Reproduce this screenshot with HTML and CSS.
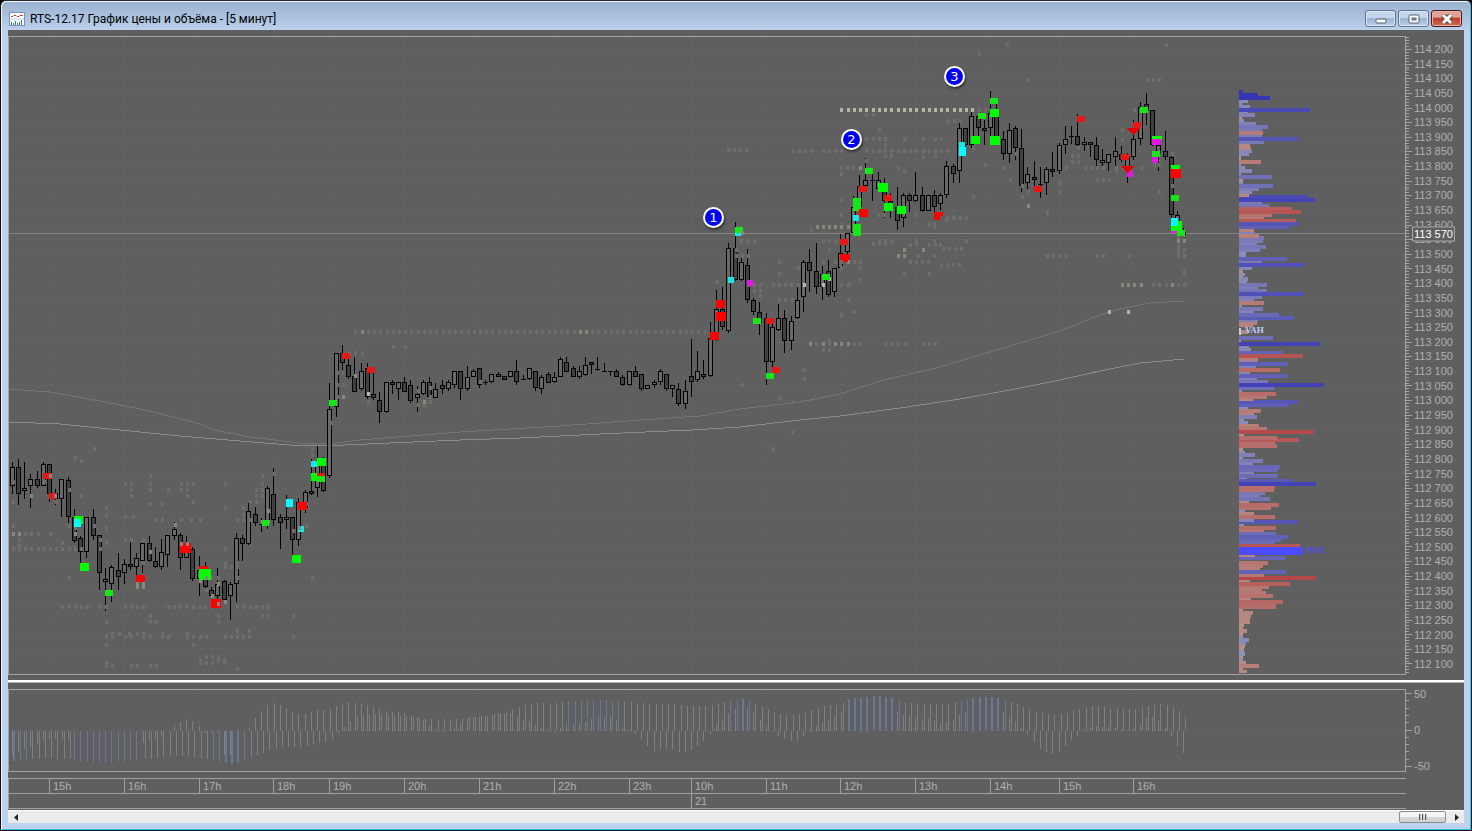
FILE: index.html
```html
<!DOCTYPE html>
<html lang="ru">
<head>
<meta charset="utf-8">
<title>RTS-12.17 График цены и объёма - [5 минут]</title>
<link rel="stylesheet" href="styles.css">
</head>
<body>
<div class="window">
  <header class="titlebar">
    <svg class="app-icon" width="16" height="14" viewBox="0 0 16 14" aria-hidden="true">
      <rect x="0.500" y="0.500" width="15" height="13" fill="#fff" stroke="#7d92b0"/>
      <path d="M2 4.500h2l1-1h2l1 1h2l1-1h3" fill="none" stroke="#d03a3a"/>
      <path d="M1 7h14" stroke="#b9c9dd"/>
      <path d="M2.500 10v3M4.500 11v2M6.500 9v4M8.500 11v2M10.500 10v3M12.500 8v5" stroke="#2f75c0"/>
    </svg>
    <h1 class="title">RTS-12.17 График цены и объёма - [5 минут]</h1>
    <div class="controls">
      <button class="control" aria-label="Свернуть"><svg width="12" height="10" viewBox="0 0 12 10"><rect x="1" y="5" width="10" height="4" rx="1" fill="#fff" stroke="#56606e"/></svg></button>
      <button class="control" aria-label="Развернуть"><svg width="12" height="10" viewBox="0 0 12 10"><rect x="1" y="1" width="10" height="8" rx="1" fill="#fff" stroke="#56606e"/><rect x="4" y="4" width="4" height="2" fill="#8fa9c8" stroke="#56606e"/></svg></button>
      <button class="control close" aria-label="Закрыть"><svg width="12" height="10" viewBox="0 0 12 10"><path d="M2 1l8 8M10 1l-8 8" stroke="#5b4548" stroke-width="5"/><path d="M2 1l8 8M10 1l-8 8" stroke="#fff" stroke-width="3"/></svg></button>
    </div>
  </header>
  <main class="content">
    <section class="panel price-panel">
      <svg class="plot" id="price" viewBox="8 36 1398 639" preserveAspectRatio="none" role="img" aria-label="График цены"></svg>
      <div class="axis">
        <svg class="ticks" id="price-ticks" viewBox="0 36 7 639" preserveAspectRatio="none"></svg>
        <div class="price-labels" id="price-labels"></div>
        <output class="last-price">113 570</output>
      </div>
    </section>
    <div class="splitter"></div>
    <section class="panel osc-panel">
      <svg class="plot" id="osc" viewBox="8 689 1398 83" preserveAspectRatio="none" role="img" aria-label="Осциллятор"></svg>
      <div class="axis">
        <svg class="ticks" id="osc-ticks" viewBox="0 689 7 83" preserveAspectRatio="none"></svg>
        <div class="osc-labels"><span>50</span><span>0</span><span class="negative">-50</span></div>
      </div>
    </section>
    <section class="time-axis">
      <div class="hours"><span></span><span>15h</span><span>16h</span><span>17h</span><span>18h</span><span>19h</span><span>20h</span><span>21h</span><span>22h</span><span>23h</span><span>10h</span><span>11h</span><span>12h</span><span>13h</span><span>14h</span><span>15h</span><span>16h</span></div>
      <div class="days"><span></span><span>21</span></div>
    </section>
    <div class="scrollbar">
      <button class="arrow" aria-label="Влево"><svg width="5" height="7" viewBox="0 0 5 7"><path d="M4 0v7L0 3.500z" fill="#222"/></svg></button>
      <div class="track"><button class="thumb" aria-label="Прокрутка"><i></i><i></i><i></i></button></div>
      <button class="arrow" aria-label="Вправо"><svg width="5" height="7" viewBox="0 0 5 7"><path d="M1 0v7l4-3.500z" fill="#222"/></svg></button>
    </div>
  </main>
</div>
<script src="chart.js"></script>
</body>
</html>
```

FILE: styles.css
```css
* { box-sizing: border-box; }
html, body { height: 100%; }
body {
  margin: 0;
  background: #000;
  font-family: "Liberation Sans", Arial, sans-serif;
  font-size: 11px;
  color: #b0b0b0;
}
button { font: inherit; padding: 0; margin: 0; }
svg { display: block; }

.window {
  height: 100vh;
  min-height: 400px;
  display: flex;
  flex-direction: column;
  background: #bcd2ee;
  border: 1px solid #111;
  border-top: 1px solid #2a2a30;
  border-radius: 6px 6px 0 0;
  box-shadow: inset 1px 1px 0 #f4f8fd, inset -1px -1px 0 #2fc3dc;
  padding: 0 7px 7px;
}
.titlebar {
  flex: none;
  display: flex;
  align-items: center;
  gap: 5px;
  margin: 1px -6px 0;
  height: 28px;
  padding: 5px 8px 0 7px;
  background: linear-gradient(#9ab2d1, #bad0eb);
  border-radius: 5px 5px 0 0;
}
.title {
  flex: 1;
  margin: 0;
  font: 400 12px/16px Roboto, "Noto Sans", sans-serif;
  color: #000;
  white-space: nowrap;
  overflow: hidden;
}
.controls { display: flex; gap: 2px; }
.control {
  width: 31px;
  height: 17px;
  display: flex;
  align-items: center;
  justify-content: center;
  border: 1px solid #5f7391;
  border-radius: 3px;
  background: linear-gradient(#c4d6ec 0 45%, #9bb4d2 50%, #b9d0ea);
  box-shadow: inset 0 0 0 1px #dce8f6;
}
.close {
  border-color: #4c1519;
  background: linear-gradient(#e0a196 0 40%, #bd3f29 50%, #cf6a50);
  box-shadow: inset 0 0 0 1px #e5b3a8;
}

.content {
  flex: 1;
  min-height: 0;
  display: flex;
  flex-direction: column;
  background: #5f5f5f;
  padding-top: 6px;
}
.panel { display: flex; min-height: 0; }
.price-panel { flex: 1; }
.osc-panel { height: 83px; margin: 6px 0; }
.plot { flex: 1; min-width: 0; height: 100%; }
.axis { position: relative; width: 58px; display: flex; }
.ticks { width: 7px; height: 100%; }
.price-labels, .osc-labels {
  display: flex;
  flex-direction: column;
  justify-content: space-between;
  line-height: 14px;
  padding: 6px 0 4px 1px;
  white-space: nowrap;
}
.osc-labels { padding: 0 0 0 1px; height: 86px; margin-top: -2px; }
.last-price {
  position: absolute;
  left: 6px;
  top: 31%;
  transform: translateY(-50%);
  padding: 0 1px;
  line-height: 13px;
  border: 1px solid #a8a8a8;
  background: #5f5f5f;
  color: #fff;
  white-space: nowrap;
}
.splitter {
  height: 3px;
  flex: none;
  margin-top: 5px;
  background: #fff;
  border-bottom: 1px solid #b4b4b4;
}
.time-axis { margin-right: 58px; border-bottom: 1px solid #a0a0a0; border-left: 1px solid #a0a0a0; }
.hours, .days { display: grid; border-top: 1px solid #a0a0a0; height: 15px; line-height: 14px; }
.hours { grid-template-columns: 40fr 75fr 75fr 74fr 56fr 75fr 75fr 75fr 75fr 62fr 75fr 74fr 75fr 75fr 69fr 74fr 273fr; }
.days { grid-template-columns: 682fr 715fr; }
.hours span, .days span { padding-left: 3px; border-left: 1px solid #a0a0a0; }
.hours span:first-child, .days span:first-child { border-left: 0; }
.scrollbar {
  display: flex;
  height: 13px;
  flex: none;
  margin-top: 1px;
  background: #ebebeb;
  border-top: 1px solid #fff;
}
.arrow { width: 16px; border: 0; background: none; display: flex; align-items: center; justify-content: center; }
.track { flex: 1; display: flex; justify-content: flex-end; padding-right: 2px; }
.thumb {
  width: 47px;
  display: flex;
  align-items: center;
  justify-content: center;
  gap: 1px;
  border: 1px solid #8c8c8c;
  border-radius: 2px;
  background: linear-gradient(#f5f5f5 0 45%, #d9d9d9 50%, #cfcfcf);
}
.thumb i { width: 2px; height: 6px; background: #555; border-right: 1px solid #ccc; }

.frame, .tick { stroke: #a3a3a3; fill: none; }
.grid { stroke: #646464; stroke-dasharray: 4 4; }
.crosshair { stroke: #858585; }
.ma-slow { fill: none; stroke: #8b8b8b; }
.ma-fast { fill: none; stroke: #747474; }
.cell { fill: #6e6d68; }
.cell-mid { fill: #88877b; }
.cell-high { fill: #b5b4a4; }
.wick { fill: #000; }
.up { fill: #696969; stroke: #000; }
.down { fill: #404040; stroke: #000; }
.bar { fill: #808080; }
.bar-extreme { fill: #6a7796; }
.badge { fill: #0000f4; stroke: #fff; stroke-width: 2; filter: drop-shadow(1px 2px 1px #333); }
.badge-text { fill: #fff; font: 13px "DejaVu Sans", sans-serif; text-anchor: middle; }
.level-text { font: 700 9px "Liberation Serif", serif; }
```

FILE: chart.js
```js
const CRISP = 'shape-rendering="crispEdges"';
const rect = (x, y, w, h, attrs) => `<rect x="${x}" y="${y}" width="${w}" height="${h}" ${attrs}/>`;
const line = (x1, y1, x2, y2, cls) => `<path class="${cls}" d="M${x1} ${y1}L${x2} ${y2}"/>`;
const px = v => Math.round(v / 3);
const col = v => Math.floor(v / 3);

// Segments hold coordinates in thirds of a pixel, measured from their origin.
// Candle: x, high, body top, body bottom, low, falling
const segments = [
{ ox: 0, oy: 430,
  candles: `37,96,112,167,192,0 55,87,112,192,225,1 73,96,175,184,207,0 91,132,148,167,234,0 112,124,148,167,175,1 130,96,103,167,167,0 148,103,103,193,215,1 166,177,190,208,225,0 184,148,148,208,262,0 205,141,150,262,280,1 223,237,262,332,340,1 241,319,325,367,410,1 259,262,262,367,383,0 280,237,262,317,330,1 298,316,316,430,480,1 316,415,448,454,543,0 334,404,412,463,516,0 355,369,421,440,480,1 373,387,403,430,462,0 391,333,403,412,420,1 409,370,385,412,440,0 427,340,340,394,430,0 448,317,340,394,395,1 466,352,394,412,413,1 484,326,367,412,420,0 502,316,316,376,410,0 523,276,298,317,329,0 541,310,316,385,420,1 559,318,345,385,385,0 577,352,358,448,454,1 598,378,421,448,498,0 616,396,440,472,487,1 634,470,481,499,500,1 652,414,463,499,510,0 673,450,454,510,512,1 691,456,463,499,570,0 709,309,325,463,516,0 727,315,325,341,393,1 745,220,244,341,345,0 766,231,253,280,287,1 784,265,282,283,305,1 802,168,175,283,296,0 820,114,193,271,288,1 841,253,262,280,356,1 859,195,262,271,297,0 877,262,262,331,375,1 895,205,217,331,348,0 916,180,185,235,250,0 934,88,184,193,195,1 952,48,95,175,200,0 970,82,88,184,185,1`,
  cells: `57:283,937 84:227 93:245 75:937 138:133,151,451,787 156:40,133 132:823 162:376,394,451,544,562,580,787,676 180:208,394,505,544,562,451,770,787 198:245,394,562,787,770 216:40,169,580,751,770 222:451,487,919 234:319,676,730 255:319,730 261:376,400 270:466,544,573,601,712,730,751,487 288:40,208,283,919 294:319,226 303:880 312:76,94,115,151 330:58,301,376,394,430 339:187,319 348:58 357:40,58,76,94,115,133,151,169,187,208,226,245,301,676 366:451 399:430,676,712 411:694,712,676 444:208,616,634,655,712,937 480:619 531:187,208,226,245,262,301,319,376,394,412,430,505,523,541,559,580,601,616,634,712,730,751,770,787,805 558:451,655,787,805,880 576:319,451,469,655 603:712,748 612:337,358,387,412,430,487,562 621:319,337,376,394,430,451,487,505,562,580,601,619,676,694,712,730,748,880 645:319,580 681:619,637,655 690:601,655,673 699:319,601,619,637,673 708:319,337,394,412,451,469 717:712`,
  mid: `198:94 285:526 312:40,58,226 243:805 276:805,787 366:451 461:412,430 470:412,430 454:601 498:637 462:655 516:676`, high: ``,
  marks: `129,129,26,18,r 147,190,24,17,r 222,258,27,24,G 221,267,22,24,C 240,399,27,24,G 315,480,24,18,g 408,435,27,22,R 540,339,33,30,R 597,408,27,9,R 597,417,36,33,G 633,507,30,27,R 786,271,21,17,g 858,207,21,24,C 893,216,28,24,R 876,375,27,24,G 894,288,18,18,c 933,93,18,18,c 951,84,27,24,G 933,129,20,25,G 951,129,24,27,g 951,129,24,9,r`,
  top: `342:544,562 138:151 198:166 444:619 522:655 294:898` },
{ ox: 300, oy: 320,
  candles: `88,189,268,469,475,0 109,99,100,260,291,0 127,75,100,128,150,1 145,115,136,170,177,1 163,110,168,215,215,1 184,129,154,206,213,0 202,129,145,232,238,1 220,150,223,233,240,1 238,216,241,277,309,1 259,187,187,277,278,0 277,180,187,196,222,1 295,187,187,206,240,0 313,171,187,215,216,1 331,180,196,242,249,1 352,198,223,233,276,0 370,180,187,223,224,0 388,171,187,232,235,1 406,190,206,233,234,0 427,180,196,206,222,1 445,180,187,206,213,0 463,154,154,196,204,0 481,154,154,206,240,1 502,138,170,206,213,0 520,147,154,170,171,0 538,145,145,196,204,1 556,180,187,187,195,0 574,162,163,187,188,0 595,156,163,170,171,1 613,168,169,179,180,1 631,154,154,170,171,0 649,120,154,187,195,1 670,165,178,178,179,0 688,145,145,178,179,0 706,154,154,205,213,1 724,165,170,206,222,0 745,156,163,188,189,1 763,156,170,187,188,0 781,111,118,170,171,0 799,111,127,155,156,1 820,138,145,170,171,1 838,138,154,170,177,0 856,111,136,164,168,0 874,127,127,136,162,1 892,111,146,146,153,0 913,129,154,154,155,0 931,154,154,154,168,0 949,147,154,170,171,1 967,165,170,196,197,1 988,154,154,196,197,0 1006,138,154,170,171,1 1024,163,163,206,213,1 1042,195,196,206,207,0 1063,180,187,196,204,0 1081,147,154,187,195,0 1099,163,163,206,213,1 1117,195,196,206,231,0 1135,189,206,251,258,1 1156,180,214,251,267,0 1174,57,169,187,231,1 1192,93,154,179,186,0`,
  cells: `36:166,187,205,223,241,262,280,298,316,334,355,373,391,409,430,448,466,484,505,523,541,559,577,598,616,634,652,673,691,709,727,748,766,784,802,823,841,859,877,895,916,934,952,970,991,1009,1027,1045,1066,1084,1102,1120,1141,1159,1177,1195 81:280,316 99:148,166,187 159:112,130 195:112,130 231:112,130,391 246:205,373,391 255:355,373 212:355 204:391 309:94 387:37 405:37 186:541`,
  mid: `36:187,841,859 168:166 231:130 245:373`, high: `222:205`,
  marks: `87,240,24,18,g 125,99,24,18,r 201,141,24,18,r`, top: `` },
{ ox: 680, oy: 190,
  candles: `52,483,544,570,575,0 70,510,553,559,567,1 91,396,445,559,560,0 109,300,358,445,452,0 127,291,358,412,420,1 145,159,175,422,428,0 166,96,175,271,272,1 184,205,217,271,272,0 202,177,226,331,338,1 220,325,331,367,375,1 238,336,367,400,434,1 259,369,385,517,585,1 277,400,412,517,540,0 295,342,385,421,422,0 313,360,385,454,489,1 334,378,394,454,480,0 352,291,331,385,386,0 370,210,217,322,366,0 388,177,217,244,306,1 409,159,244,290,312,1 427,228,253,290,330,0 445,210,244,314,320,1 463,235,235,307,320,0 481,132,190,235,236,0 502,130,130,185,215,0`,
  cells: `30:484 75:484,596,614,709 102:748,763 111:763 426:1,19,37,55,75 120:394 129:187,430 153:184,205,223,430,448,709,763 162:580,598,616,709 180:169,448 198:169,187,205,715,763 216:298,523,541,430,466,484,691,709,727,745 234:355,484,541 252:298,673,748 270:541 276:112 285:205,223,241,280,298,316,334,355,484,505 303:223,241 318:241 330:298,316,337,505 366:523 375:484 462:409,448,523,541,616,634,655,676,730,748,766 453:448 480:430,448 540:373 567:373 585:187 627:298 635:337 90:800 81:820 177:790,808,826,844 225:784,802,820,838 726:337 778:280`,
  mid: `111:412,430,448,466,484,505 180:673,731 198:655,673 216:505 462:391,430,466,484,505`, high: `285:373,430 267:448`,
  marks: `165,111,24,18,g 165,129,18,9,c 144,261,18,18,c 201,270,18,18,m 108,330,27,24,R 108,366,29,27,R 90,426,27,24,R 219,384,24,18,g 257,384,24,18,r 258,549,24,18,g 275,531,24,18,r 426,252,24,18,g 480,147,24,18,r 480,192,30,18,R 489,208,14,10,R`, top: `129:187` },
{ ox: 820, oy: 50,
  candles: `100,438,472,550,551,0 118,375,409,472,495,0 136,324,391,409,410,0 157,372,391,391,453,0 175,366,391,418,419,0 193,384,418,454,504,1 211,430,454,470,504,1 232,411,472,514,540,1 250,429,436,505,530,0 268,430,436,454,486,1 286,366,436,454,455,0 307,411,436,482,486,1 325,436,436,482,483,0 343,420,436,472,490,1 361,430,436,463,480,0 379,333,349,436,444,0 400,342,349,373,399,1 418,219,235,364,399,0 436,235,235,286,300,1 454,186,199,286,293,0 475,190,199,235,270,1 493,210,235,241,285,1 511,123,190,235,260,0 529,160,199,270,271,1 550,243,268,313,330,1 568,219,241,313,339,0 586,228,235,295,330,1`,
  cells: `12:478 180:478,496 195:139,160 213:385,403,421 240:178 267:139,160,178,196,310,347,365,253 285:196 294:460 303:-80,-62,-44,-26,10,28,46,64,139,160,178,196,214,234,253,271,289,310,328,347,365,383 318:196,214,347 321:310 333:139 354:64,82,100,121,235 363:253 372:64 441:460 345:496 504:383,403,421,439 574:28,46,178,196,214,440 585:271,328,346,361 300:-275,-257,-239,-221`,
  mid: `531:10,28 354:121`, high: `180:64,85,103,121,139,160,178,196,214,235,253,271,289,310,328,346,364,382,403,421,439,457`,
  marks: `99,444,24,40,g 99,495,18,18,c 117,477,27,24,R 99,522,24,36,g 117,408,24,18,r 135,354,24,18,g 174,399,30,27,G 192,435,24,18,r 192,459,27,24,G 231,468,27,24,G 342,486,27,12,R 342,498,18,12,R 417,276,18,16,c 417,292,21,27,C 453,258,27,24,G 474,189,24,18,g 510,144,24,18,g 510,177,27,24,G 510,258,30,27,G`, top: `` },
{ ox: 1000, oy: 70,
  candles: `64,177,235,349,366,1 82,291,313,340,356,0 103,273,322,331,356,1 121,291,341,341,384,0 139,291,298,340,375,0 157,246,298,304,320,1 178,219,226,304,312,0 196,168,208,226,252,0 214,168,199,199,222,0 232,132,199,226,228,1 253,201,217,226,243,0 271,216,217,226,261,1 289,201,226,271,288,1 307,237,271,280,288,0 325,252,253,280,303,0 346,201,244,262,288,0 364,228,253,271,275,1 382,250,262,300,339,0 400,150,208,262,270,0 421,96,112,208,225,0 439,69,103,121,165,1 457,121,121,226,228,1 475,200,226,248,303,0 496,183,244,262,270,1 514,258,262,436,446,1 532,423,436,480,482,0 550,474,485,488,492,0`,
  cells: `-75:22,499 30:85,442,460,478 120:403 180:367 210:367 235:235 258:217,235 275:217,235 252:49,518 284:463,478 294:13,199,256,274,292,310,349,367,424 303:349 330:31,292,310,328 339:181 348:67,518 366:85,181,478 381:67 427:142 435:142 558:142,160,181,199,292,310,385,535,553 530:535 540:553,535 549:535 503:535 602:553 611:553 645:460,478,499,535,553`,
  mid: `408:85 513:535,553 645:367,385,403,424,517`, high: `726:328,385`,
  marks: `102,348,24,18,r 231,138,24,18,r 363,252,24,18,r 382,303,18,18,m 399,156,24,18,r 420,111,24,18,g 456,198,30,12,G 456,207,27,18,m 456,243,24,18,g 456,262,18,18,m 513,285,27,12,G 513,297,30,27,R 513,375,24,18,g 513,453,33,30,G 513,444,21,24,C 513,483,18,7,m 531,480,24,18,g`, top: `` }
];
const markColor = { r: '#e61717', R: '#ff0000', g: '#17e617', G: '#00ff00', c: '#17e6e6', C: '#00ffff', m: '#e617e6' };

// Volume profile: top-bottom:right edge, "r" marks a selling level
const profile = [
[0, `300-309:54 309-315:36 315-325:60 337-346:54 324-335:240 339-350:75 350-357:36r 357-366:42 366-376:78 375-387:114 387-395:96 405-412:96 394-406:99r 412-423:208 423-432:102 432-440:60r 440-449:63r 449-459:66 459-468:57 468-480:33r 480-492:93r 492-498:33 498-507:45 507-518:66 518-525:33 525-537:126 537-544:39r 544-552:39 552-563:129 563-572:87 572-582:66 586-596:233 582-591:57r 594-605:255 605-612:96 612-622:117 622-630:186r 630-641:213r 641-650:126r 650-657:102r 657-668:198r 667-678:208 678-687:177 687-696:72r 696-702:75 709-720:102 702-713:87r 720-729:99 729-737:81 736-747:108 747-756:90 756-773:48 771-783:171 783-791:96 790-801:221 801-810:66 810-820:39r 820-828:45 828-836:39r 832-843:54 843-850:51 850-861:110 861-868:84 868-878:111`],
[290, `6-18:221 18-27:96 27-35:72 33-45:102r 45-52:36 52-63:99 63-70:72 78-90:193 70-81:147 90-96:84 96-105:81r 105-112:70r 120-132:54r 138-150:129 150-158:33 156-168:270 168-175:57 175-185:63 183-194:159 192-204:219r 204-213:84r 213-218:81 216-228:174 228-234:78 234-246:150r 246-253:60 252-264:171 264-272:81 270-280:114 280-291:282 291-300:132 300-307:36 306-318:138r 318-327:111r 330-342:203 327-333:69r 342-351:177 351-358:54 357-369:93r 369-376:72r 376-387:81 387-394:42 394-403:54 402-412:87r 412-422:111r 420-432:252r 432-439:42r 444-456:207r 438-450:141r 456-464:135r 463-474:141r 474-482:39r 482-490:45 489-501:75 501-507:39 507-519:99 519-527:69 525-537:150 537-546:144 546-552:72 552-564:144 564-571:51 568-578:188 576-588:258 588-597:135r 597-605:132r`],
[490, `6-15:105 15-22:90 21-33:120 33-40:57r 39-51:147r 51-60:123r 60-68:45 67-76:72r 76-87:135r 90-102:205 87-95:72 102-110:42 108-120:138r 120-127:102r 127-136:138 136-147:174 147-156:153 156-165:135 162-174:210r 198-210:165 195-200:75r 212-224:114r 224-234:99r 234-242:90r 240-252:168 258-270:258r 252-260:102r 270-278:60r 276-288:180r 288-297:117r 297-303:96r 303-312:108r 312-324:129r 330-342:159r 324-331:63r 342-357:138r 357-363:39r 363-375:69r 375-384:63r 384-402:60r 402-411:42r 411-417:39r 417-429:51r 429-437:39r 437-444:39 444-456:57 456-465:48 465-474:45r 474-480:42r 480-487:42 487-497:45 497-505:39r 505-513:39 513-522:48r 522-533:87r 533-540:39r 540-549:51r`]
];

const hours = [49, 124, 199, 273, 329, 404, 479, 554, 629, 691, 766, 840, 915, 990, 1059, 1133];

function shade(width, selling) {
  const t = Math.min(1, width / 78);
  const from = selling ? [182, 147, 140] : [147, 147, 184];
  const to = selling ? [182, 70, 70] : [66, 66, 182];
  return `rgb(${from.map((v, i) => Math.round(v + (to[i] - v) * t)).join()})`;
}

function cells(seg, key, cls) {
  return seg[key].split(' ').filter(Boolean).map(row => {
    const [y, xs] = row.split(':');
    return xs.split(',').map(x => rect(seg.ox + col(+x) - 1, seg.oy + px(+y) - 2, 3, 4, `class="${cls}"`)).join('');
  }).join('');
}

function drawPrice() {
  let s = `<g ${CRISP}>`;
  for (let k = 0; k < 43; k++) s += line(9, Math.round(49 + k * 14.63) + 0.5, 1406, Math.round(49 + k * 14.63) + 0.5, 'grid');
  for (const h of hours) s += line(h + 0.5, 37, h + 0.5, 674, 'grid');
  s += '<polyline class="ma-fast" points="9,389 50,392 100,401 150,411 200,424 214,430 250,437 300,443 330,444 360,440 460,432 560,426 640,420 700,416 740,409 800,402 840,394 880,381 940,367 1000,349 1060,331 1110,311 1150,303 1184,301"/>';
  s += '<polyline class="ma-slow" points="9,422 60,424 120,430 180,436 240,441 290,445 345,445 390,443 460,440 520,438 600,434 691,430 740,427 800,420 840,416 900,408 960,399 1010,390 1060,380 1100,371 1140,363 1184,359"/>';
  s += line(9, 233.5, 1406, 233.5, 'crosshair');
  for (const seg of segments) {
    for (const c of seg.candles.split(' ')) {
      const [x, hi, top, bottom, lo, falling] = c.split(',').map(Number);
      const cx = seg.ox + col(x);
      s += rect(cx, seg.oy + px(hi), 1, Math.max(1, px(lo) - px(hi)), 'class="wick"');
      const h = px(bottom) - px(top);
      s += h < 1 ? rect(cx - 2, seg.oy + px(top), 5, 1, 'class="wick"')
        : rect(cx - 1.5, seg.oy + px(top) + 0.5, 4, Math.max(2, h - 1), `class="${falling ? 'down' : 'up'}"`);
    }
  }
  for (const seg of segments) {
    s += cells(seg, 'cells', 'cell') + cells(seg, 'mid', 'cell-mid') + cells(seg, 'high', 'cell-high');
    for (const m of seg.marks.split(' ')) {
      const [x, y, w, h, c] = m.split(',');
      s += rect(seg.ox + px(+x), seg.oy + px(+y), px(+w), px(+h), `fill="${markColor[c]}"`);
    }
    s += cells(seg, 'top', 'cell-mid');
  }
  s += '<path fill="#e60000" d="M1121 166h13l-6.500 7zM1127 128h13l-6.500 7z"/>';
  s += rect(1239, 90, 4, 3, 'fill="#3636b4"') + rect(1239, 93, 19, 3, 'fill="#3636b4"') + rect(1239, 96, 31, 4, 'fill="#3636b4"');
  for (const [oy, rows] of profile) {
    for (const r of rows.split(' ')) {
      const [, a, b, right, sell] = r.match(/(\d+)-(\d+):(\d+)(r?)/);
      const w = px(+right) - 9;
      s += rect(1239, oy + px(+a), w, px(+b) - px(+a), `fill="${shade(w, sell)}"`);
    }
  }
  s += rect(1239, 328, 2, 7, 'fill="#c8d0e6"') + rect(1239, 547, 64, 8, 'fill="#4b4bff"');
  s += rect(8.5, 36.5, 1397, 638, 'class="frame"') + '</g>';
  s += '<text class="level-text" x="1245" y="333" fill="#c3ceff">VAH</text><text class="level-text" x="1307" y="553" fill="#4b4bff">POC</text>';
  [[713, 217], [851, 139], [954, 76]].forEach(([x, y], i) => {
    s += `<circle class="badge" cx="${x + 0.5}" cy="${y + 0.5}" r="9.5"/><text class="badge-text" x="${x + 0.5}" y="${y + 5}">${i + 1}</text>`;
  });
  document.getElementById('price').innerHTML = s;

  let t = `<g ${CRISP}>`, labels = '';
  for (let k = -4; k < 214; k++) {
    const y = Math.round(49 + k * 2.926) + 0.5;
    t += line(0, y, k % 5 ? 3 : 6, y, 'tick');
  }
  for (let p = 114200; p >= 112100; p -= 50) labels += `<span>${String(p).slice(0, 3)} ${String(p).slice(3)}</span>`;
  document.getElementById('price-ticks').innerHTML = t + '</g>';
  document.getElementById('price-labels').innerHTML = labels;
}

const fast = '12:-24 18:-21 24:-18 30:-16 37:-14 43:-10 50:-8 68:-8 73:-29 90:-32 105:-32 120:-31 137:-29 142:-12 149:-10 156:-8 161:-6 167:-1 174:6 180:9 186:12 192:10 199:5 205:-2 212:-1 218:-1 224:-24 231:-24 236:0 242:0 248:3 255:13 261:20 267:26 273:28 280:26 286:23 292:19 298:17 304:17 311:19 317:21 330:22 336:25 342:28 348:29 354:28 361:28 373:24 386:20 404:18 411:15 417:14 423:11 429:5 436:1 442:-1 448:1 454:4 461:9 473:14 486:15 500:17 510:18 516:16 523:11 529:10 535:6 541:3 548:1 554:-1 560:3 566:6 573:7 579:7 585:9 591:12 598:14 610:14 616:11 622:4 629:1 635:-3 641:-9 647:-15 654:-20 660:-18 672:-18 678:-21 685:-21 691:-19 697:-15 703:-10 710:-3 716:6 722:12 728:18 735:22 741:25 747:22 753:18 759:12 766:5 772:-1 778:-5 784:-8 791:-10 797:-10 803:-5 809:1 816:5 822:9 828:11 834:14 840:18 847:26 872:30 890:24 897:19 903:16 915:13 922:12 928:12 934:10 940:7 946:9 953:11 959:16 965:19 971:25 990:28 996:24 1003:19 1009:14 1015:10 1021:3 1027:-4 1034:-11 1040:-18 1046:-21 1052:-23 1059:-21 1065:-15 1071:-9 1077:-5 1084:1 1090:4 1096:5 1102:4 1115:3 1127:1 1133:2 1140:7 1146:13 1152:14 1158:10 1165:3 1171:-5 1177:-15 1184:-23';
const slow = '12:-30 20:-29 40:-27 68:-28 73:0 137:0 142:-28 150:-28 170:-25 185:-25 200:-27 212:-29 220:-32 231:-33 238:-31 250:-26 258:-23 268:-19 280:-16 300:-16 312:-14 325:-10 332:-7 338:0 344:6 350:12 356:15 368:17 386:16 404:15 419:13 435:12 450:12 461:13 479:15 487:15 493:17 500:19 512:23 525:26 537:28 550:28 568:30 593:31 618:30 625:29 650:27 668:27 687:25 705:25 718:28 730:31 741:32 749:29 761:24 774:18 787:16 793:16 806:19 811:22 824:25 840:27 845:32 859:33 872:35 878:35 891:33 899:30 911:28 930:27 948:27 958:30 964:31 970:33 978:34 990:34 996:33 1005:30 1017:26 1029:21 1042:17 1054:16 1061:17 1073:21 1092:25 1110:23 1123:22 1135:22 1148:26 1160:27 1167:26 1173:23 1179:18 1184:13';

function sampler(text) {
  const pts = text.split(' ').map(p => p.split(':').map(Number));
  return x => {
    const i = pts.findIndex(p => p[0] >= x);
    if (i <= 0) return (i ? pts[pts.length - 1] : pts[0])[1];
    const [x0, a] = pts[i - 1], [x1, b] = pts[i];
    return Math.round(a + (b - a) * (x - x0) / (x1 - x0));
  };
}

function drawOscillator() {
  const f = sampler(fast), g = sampler(slow);
  let s = `<g ${CRISP}>`;
  for (const y of [693.5, 730.5, 766.5]) s += line(9, y, 1406, y, 'grid');
  for (const h of hours) s += line(h + 0.5, 690, h + 0.5, 771, 'grid');
  const bar = (x, v, w, hot) => v ? rect(x, v > 0 ? 731 - v : 731, w, Math.abs(v), `class="${hot ? 'bar-extreme' : 'bar'}"`) : '';
  for (let i = 0; i < 189; i++) {
    const x = Math.floor(12.3 + i * 6.231);
    const a = f(x), b = g(x);
    const wide = b >= 32 || b <= -32 || i === 0;
    if (!wide || b < 0) s += bar(x, a, 1, a <= -29);
    s += bar(wide ? x + 1 : x + 2, b, wide ? 2 : 1, b >= 30 || b <= -29);
  }
  s += rect(8.5, 689.5, 1397, 82, 'class="frame"') + '</g>';
  document.getElementById('osc').innerHTML = s;
  let t = `<g ${CRISP}>`;
  for (let k = 0; k <= 10; k++) {
    const y = Math.round(693 + k * 7.3) + 0.5;
    t += line(0, y, k % 5 ? 3 : 6, y, 'tick');
  }
  document.getElementById('osc-ticks').innerHTML = t + '</g>';
}

drawPrice();
drawOscillator();
```
